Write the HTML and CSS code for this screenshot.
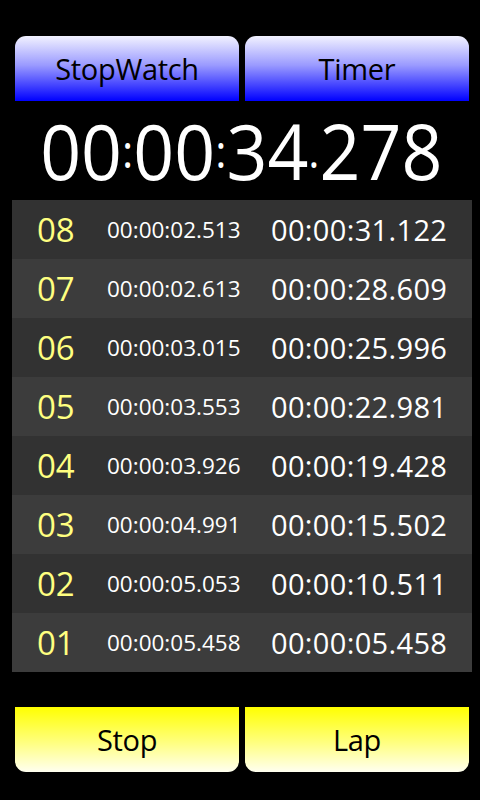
FILE: index.html
```html
<!DOCTYPE html>
<html>
<head>
<meta charset="utf-8">
<link rel="stylesheet" href="styles.css">
</head>
<body>
<div class="screen">
  <div class="tabs">
    <div class="btn tab">StopWatch</div>
    <div class="btn tab">Timer</div>
  </div>
  <div class="clock"><span class="clock-inner">00<span class="sep">:</span>00<span class="sep">:</span>34<span class="sep">.</span>278</span></div>
  <div class="laps">
    <div class="row"><span class="num">08</span><span class="split">00:00:02.513</span><span class="total">00:00:31.122</span></div>
    <div class="row"><span class="num">07</span><span class="split">00:00:02.613</span><span class="total">00:00:28.609</span></div>
    <div class="row"><span class="num">06</span><span class="split">00:00:03.015</span><span class="total">00:00:25.996</span></div>
    <div class="row"><span class="num">05</span><span class="split">00:00:03.553</span><span class="total">00:00:22.981</span></div>
    <div class="row"><span class="num">04</span><span class="split">00:00:03.926</span><span class="total">00:00:19.428</span></div>
    <div class="row"><span class="num">03</span><span class="split">00:00:04.991</span><span class="total">00:00:15.502</span></div>
    <div class="row"><span class="num">02</span><span class="split">00:00:05.053</span><span class="total">00:00:10.511</span></div>
    <div class="row"><span class="num">01</span><span class="split">00:00:05.458</span><span class="total">00:00:05.458</span></div>
  </div>
  <div class="controls">
    <div class="btn ctl">Stop</div>
    <div class="btn ctl">Lap</div>
  </div>
</div>
</body>
</html>
```
FILE: styles.css
```css
html, body {
  margin: 0;
  padding: 0;
  background: #000;
}
body {
  font-family: "Open Sans", "DejaVu Sans", sans-serif;
  width: 480px;
  height: 800px;
  overflow: hidden;
}
.screen {
  display: flex;
  flex-direction: column;
  padding-top: 36px;
}
.tabs, .controls {
  display: flex;
  gap: 6px;
  padding: 0 11px 0 15px;
}
.btn {
  flex: 1;
  height: 65px;
  display: flex;
  align-items: center;
  justify-content: center;
  color: #000;
  font-size: 29px;
  letter-spacing: -0.3px;
}
.tab {
  border-radius: 11px 11px 0 0;
  background: linear-gradient(to bottom, #f2f2ff 0%, #9a9aff 45%, #0000ff 100%);
}
.ctl {
  border-radius: 0 0 11px 11px;
  background: linear-gradient(to bottom, #ffff00 0%, #ffff80 55%, #fffff0 100%);
}
.clock {
  height: 99px;
  display: flex;
  align-items: center;
  justify-content: center;
  color: #fff;
  font-size: 77px;
  line-height: 1;
}
.clock-inner {
  display: inline-block;
  transform: translateX(1px) scaleX(0.93);
  white-space: nowrap;
}
.sep {
  font-size: 46px;
  vertical-align: 12px;
}
.laps {
  margin: 0 8px 0 12px;
  display: flex;
  flex-direction: column;
}
.row {
  height: 59px;
  display: flex;
  align-items: center;
  background: #323232;
}
.row:nth-child(even) {
  background: #3c3c3c;
}
.num {
  width: 95px;
  padding-left: 25px;
  box-sizing: border-box;
  color: #ffff80;
  font-size: 33px;
}
.split {
  width: 164px;
  color: #fff;
  font-size: 22.5px;
}
.total {
  color: #fff;
  font-size: 29px;
  letter-spacing: 0.35px;
}
.controls {
  margin-top: 35px;
}
```
